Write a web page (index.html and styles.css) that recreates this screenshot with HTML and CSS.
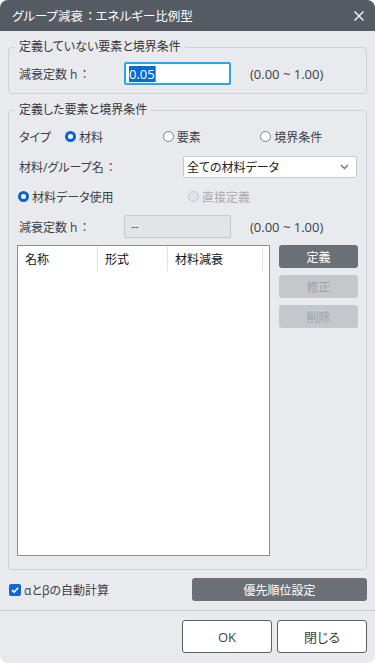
FILE: index.html
```html
<!DOCTYPE html>
<html lang="ja">
<head>
    <meta charset="UTF-8">
    <meta name="viewport" content="width=device-width, initial-scale=1.0">
    <title>グループ減衰：エネルギー比例型</title>
    <link rel="stylesheet" href="styles.css">
</head>
<body>
    <div class="dialog">
        <div class="titlebar">
            <span class="title">グループ減衰<span class="colon">：</span>エネルギー比例型</span>
            <svg class="close" width="10" height="10" viewBox="0 0 10 10">
                <path d="M0.5 0.5 L9.5 9.5 M9.5 0.5 L0.5 9.5" stroke="#fff" stroke-width="1.3" fill="none"/>
            </svg>
        </div>

        <div class="content">
            <fieldset class="group group1">
                <legend>定義していない要素と境界条件</legend>
                <div class="row">
                    <span class="label">減衰定数 h<span class="colon">：</span></span>
                    <div class="textbox focused"><span class="sel">0.05</span><span class="caret"></span></div>
                    <span class="range">(0.00 ~ 1.00)</span>
                </div>
            </fieldset>

            <fieldset class="group group2">
                <legend>定義した要素と境界条件</legend>
                <div class="rows">
                    <div class="row type-row">
                        <span class="type-label">タイプ</span>
                        <label class="radio-item"><span class="radio checked"></span>材料</label>
                        <label class="radio-item"><span class="radio"></span>要素</label>
                        <label class="radio-item"><span class="radio"></span>境界条件</label>
                    </div>
                    <div class="row">
                        <span class="label wide">材料/グループ名<span class="colon">：</span></span>
                        <div class="select">
                            <span>全ての材料データ</span>
                            <svg width="9" height="6" viewBox="0 0 9 6">
                                <path d="M1 1 L4.5 4.5 L8 1" stroke="#6f7378" stroke-width="1.4" fill="none"/>
                            </svg>
                        </div>
                    </div>
                    <div class="row use-row">
                        <label class="radio-item first"><span class="radio checked"></span>材料データ使用</label>
                        <label class="radio-item disabled"><span class="radio"></span>直接定義</label>
                    </div>
                    <div class="row">
                        <span class="label">減衰定数 h<span class="colon">：</span></span>
                        <div class="textbox disabled">--</div>
                        <span class="range">(0.00 ~ 1.00)</span>
                    </div>
                </div>

                <div class="list-area">
                    <div class="list">
                        <div class="list-head">
                            <span class="col col-name">名称</span>
                            <span class="col col-type">形式</span>
                            <span class="col col-damp">材料減衰</span>
                        </div>
                    </div>
                    <div class="side-buttons">
                        <button class="btn dark">定義</button>
                        <button class="btn off">修正</button>
                        <button class="btn off">削除</button>
                    </div>
                </div>
            </fieldset>

            <div class="options">
                <label class="check-item">
                    <span class="checkbox">
                        <svg width="12" height="12" viewBox="0 0 12 12">
                            <path d="M3 6.2 L5.1 8.2 L9 3.9" stroke="#fff" stroke-width="1.6" fill="none"/>
                        </svg>
                    </span>
                    αとβの自動計算
                </label>
                <button class="btn dark priority">優先順位設定</button>
            </div>
        </div>

        <div class="footer">
            <button class="btn plain">OK</button>
            <button class="btn plain">閉じる</button>
        </div>
    </div>
</body>
</html>
```

FILE: styles.css
```css
body {
    margin: 0;
    background-color: #ffffff;
    font-family: "Open Sans", "Noto Sans CJK JP", sans-serif;
    font-size: 12px;
    color: #3c3f44;
    font-feature-settings: "palt";
}
.dialog {
    width: 375px;
    height: 663px;
    background-color: #e9eaee;
    border-radius: 8px;
    overflow: hidden;
    display: flex;
    flex-direction: column;
}
.titlebar {
    height: 31px;
    flex: none;
    background-color: #555b63;
    color: #ffffff;
    display: flex;
    align-items: center;
    justify-content: space-between;
    padding: 0 11px 0 12px;
    font-size: 12.5px;
}
/* 全角コロンは幅を詰めない */
.colon {
    font-feature-settings: normal;
    margin: 0 -1px 0 1px;
}
.close {
    margin-top: 1px;
}
.content {
    padding: 8px 8px 0 8px;
}
/* グループ枠 */
.group {
    margin: 0;
    padding: 0 8px 0 10px;
    border: 1px solid #cdd0d4;
    border-radius: 4px;
    min-width: 0;
}
.group legend {
    padding: 0 4px;
    margin-left: -4px;
    height: 16px;
    line-height: 16px;
    color: #33363a;
}
.group1 {
    padding-top: 7px;
    padding-bottom: 8px;
}
.group2 {
    margin-top: 8px;
    padding-top: 7px;
    padding-bottom: 13px;
}
.row {
    display: flex;
    align-items: center;
    height: 23px;
}
.rows {
    display: flex;
    flex-direction: column;
    gap: 7px;
}
.label {
    width: 105px;
    flex: none;
}
.label.wide {
    width: 164px;
}
.textbox {
    width: 107px;
    height: 23px;
    box-sizing: border-box;
    border: 1px solid #c5c8cc;
    border-radius: 2px;
    background-color: #ffffff;
    display: flex;
    align-items: center;
    padding-left: 4px;
    flex: none;
}
.textbox.focused {
    border: 2px solid #27a6ee;
    padding-left: 3px;
}
.textbox .sel {
    background-color: #0b6ad8;
    color: #ffffff;
    font-size: 13px;
    line-height: 16px;
}
.textbox .caret {
    width: 1px;
    height: 16px;
    background-color: #e07b1a;
}
.textbox.disabled {
    background-color: #e3e4e7;
    color: #5b5f64;
    padding-left: 6px;
}
.range {
    margin-left: 19px;
    font-size: 13px;
}
/* ラジオボタン */
.type-label {
    width: 46px;
    flex: none;
}
.radio-item {
    display: flex;
    align-items: center;
    gap: 3px;
    width: 99px;
}
.radio {
    width: 11px;
    height: 11px;
    box-sizing: border-box;
    border: 1px solid #7c8086;
    border-radius: 50%;
    background-color: #ffffff;
}
.radio.checked {
    border: 3px solid #0b62d6;
}
.radio-item.first {
    width: 170px;
    margin-left: -1px;
}
.radio-item.disabled {
    color: #a9acb0;
}
.radio-item.disabled .radio {
    border-color: #c6c8cb;
    background-color: #e3e4e7;
}
.select {
    width: 174px;
    height: 22px;
    box-sizing: border-box;
    border: 1px solid #c5c8cc;
    border-radius: 2px;
    background-color: #ffffff;
    display: flex;
    align-items: center;
    justify-content: space-between;
    padding: 0 7px 0 3px;
    color: #222;
}
/* 一覧 */
.list-area {
    display: flex;
    gap: 9px;
    margin-top: 7px;
    margin-left: -2px;
}
.list {
    width: 253px;
    height: 311px;
    box-sizing: border-box;
    border: 1px solid #8b8e93;
    background-color: #ffffff;
}
.list-head {
    display: flex;
    height: 25px;
    color: #111;
}
.col {
    display: flex;
    align-items: center;
    padding-left: 7px;
    box-sizing: border-box;
    border-right: 1px solid #e1e2e4;
}
.col-name {
    width: 80px;
}
.col-type {
    width: 70px;
}
.col-damp {
    width: 95px;
}
.side-buttons {
    display: flex;
    flex-direction: column;
    gap: 7px;
}
.btn {
    font-family: inherit;
    font-size: 12px;
    font-feature-settings: "palt";
    border: none;
    border-radius: 3px;
    height: 23px;
    padding: 0;
    cursor: pointer;
}
.side-buttons .btn {
    width: 79px;
}
.btn.dark {
    background-color: #6b7077;
    color: #ffffff;
}
.btn.off {
    background-color: #c4c8cd;
    color: #9ca0a6;
}
/* 下部 */
.options {
    display: flex;
    align-items: center;
    justify-content: space-between;
    margin-top: 8px;
    padding-left: 1px;
}
.check-item {
    display: flex;
    align-items: center;
    gap: 3px;
}
.checkbox {
    width: 12px;
    height: 12px;
    border-radius: 2px;
    background-color: #1467d8;
    display: flex;
}
.btn.priority {
    width: 175px;
}
.footer {
    margin-top: 9px;
    border-top: 1px solid #c9cbcf;
    display: flex;
    justify-content: flex-end;
    gap: 5px;
    padding: 9px 8px 0 0;
}
.btn.plain {
    width: 90px;
    height: 33px;
    background-color: #ffffff;
    border: 1px solid #5a5f66;
    color: #3c3f44;
    font-size: 13px;
}
```
